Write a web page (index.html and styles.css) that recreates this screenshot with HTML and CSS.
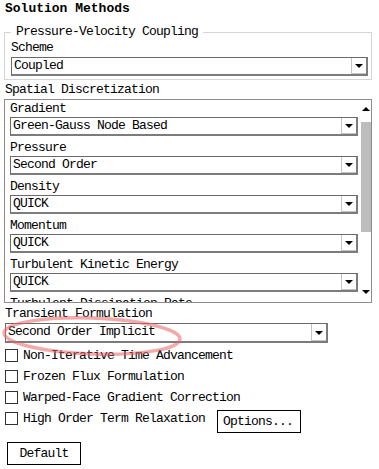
FILE: index.html
```html
<!DOCTYPE html>
<html>
<head>
  <title>Solution Methods</title>
  <link rel="stylesheet" href="styles.css">
</head>
<body>
<div class="panel">
  <div class="title">Solution Methods</div>

  <fieldset class="group">
    <legend>Pressure-Velocity Coupling</legend>
    <div class="label">Scheme</div>
    <div class="select"><span class="val">Coupled</span><span class="drop"><i class="arrow"></i></span></div>
  </fieldset>

  <div class="label outer spatial">Spatial Discretization</div>
  <div class="scrollbox">
    <div class="rows">
      <div class="label">Gradient</div>
      <div class="select"><span class="val">Green-Gauss Node Based</span><span class="drop"><i class="arrow"></i></span></div>
      <div class="label">Pressure</div>
      <div class="select"><span class="val">Second Order</span><span class="drop"><i class="arrow"></i></span></div>
      <div class="label">Density</div>
      <div class="select"><span class="val">QUICK</span><span class="drop"><i class="arrow"></i></span></div>
      <div class="label">Momentum</div>
      <div class="select"><span class="val">QUICK</span><span class="drop"><i class="arrow"></i></span></div>
      <div class="label">Turbulent Kinetic Energy</div>
      <div class="select"><span class="val">QUICK</span><span class="drop"><i class="arrow"></i></span></div>
      <div class="label">Turbulent Dissipation Rate</div>
    </div>
    <div class="scrollbar">
      <i class="arrow up"></i>
      <div class="thumb"></div>
      <i class="arrow"></i>
    </div>
  </div>

  <div class="label outer transient-label">Transient Formulation</div>
  <div class="select transient"><span class="val">Second Order Implicit</span><span class="drop"><i class="arrow"></i></span></div>

  <div class="check"><span class="box"></span>Non-Iterative Time Advancement</div>
  <div class="check"><span class="box"></span>Frozen Flux Formulation</div>
  <div class="check"><span class="box"></span>Warped-Face Gradient Correction</div>
  <div class="check"><span class="box"></span>High Order Term Relaxation<button class="btn options">Options...</button></div>

  <button class="btn default">Default</button>

  <!-- hand drawn highlight -->
  <svg class="mark" width="200" height="50" viewBox="0 0 200 50">
    <ellipse cx="92" cy="22" rx="88" ry="18" transform="rotate(2 92 22)" fill="none" stroke="rgba(232,100,100,0.55)" stroke-width="3.5"/>
  </svg>
</div>
</body>
</html>
```

FILE: styles.css
```css
body {
  margin: 0;
  background: #fff;
  font-family: "Liberation Mono", "DejaVu Sans Mono", monospace;
  font-size: 13px;
  letter-spacing: -0.8px;
  color: #000;
}

.panel {
  position: relative;
  width: 379px;
  height: 469px;
  overflow: hidden;
}

.title {
  font-weight: bold;
  font-size: 13px;
  letter-spacing: 0;
  padding: 2px 0 0 5px;
  height: 18px;
  line-height: 14px;
}

.group {
  margin: 5px 7px 0 4px;
  padding: 0 3px 3px 6px;
  border: 1px solid #d6d6d6;
}

.group legend {
  padding: 0 5px;
  line-height: 14px;
}

.label {
  height: 17px;
  line-height: 17px;
  white-space: nowrap;
}

.label.outer {
  padding-left: 5px;
}

.label.spatial {
  margin-top: 1px;
}

.label.transient-label {
  height: 18px;
  margin-top: 2px;
}

.group .label {
  height: 18px;
}

.select {
  display: flex;
  height: 19px;
  box-sizing: border-box;
  background: #fff;
  border: 1px solid #6a6a6a;
  border-right: 2px solid #7c7c7c;
  border-bottom: 2px solid #7c7c7c;
}

.select .val {
  flex: 1;
  padding-left: 2px;
  line-height: 16px;
  white-space: nowrap;
  overflow: hidden;
}

.select .drop {
  width: 15px;
  display: flex;
  align-items: center;
  justify-content: center;
  box-shadow: inset 1px -1px 0 #c4c4c4;
}

.arrow {
  display: block;
  width: 0;
  height: 0;
  border-top: 4px solid #000;
  border-left: 4px solid transparent;
  border-right: 4px solid transparent;
}

.arrow.up {
  border-top: 0;
  border-bottom: 4px solid #000;
}

.rows .select {
  margin-bottom: 3px;
}

.scrollbox {
  display: flex;
  margin: 1px 7px 0 4px;
  height: 204px;
  box-sizing: border-box;
  border: 1px solid #8c8c8c;
  overflow: hidden;
}

.rows {
  width: 348px;
  padding-left: 5px;
  overflow: hidden;
}

.scrollbar {
  flex: 1;
  display: flex;
  flex-direction: column;
  align-items: center;
  padding-left: 2px;
}

.scrollbar .up {
  margin-top: 7px;
}

.scrollbar .thumb {
  width: 10px;
  height: 110px;
  background: #bdbdbd;
  margin: 11px 0 58px;
}

.transient {
  width: 323px;
  height: 20px;
  margin-left: 5px;
  margin-bottom: 2px;
}

.check {
  display: flex;
  align-items: center;
  height: 21px;
  padding-left: 5px;
  white-space: nowrap;
}

.check .box {
  width: 11px;
  height: 11px;
  border: 1px solid #333;
  margin-right: 5px;
  background: #fff;
}

.btn {
  font-family: inherit;
  font-size: 13px;
  letter-spacing: -0.8px;
  background: #fff;
  border: 1px solid #000;
  padding: 0;
  color: #000;
}

.options {
  width: 84px;
  height: 23px;
  margin: 3px 0 -3px 12px;
  text-align: left;
  padding-left: 5px;
}

.default {
  display: block;
  width: 74px;
  height: 23px;
  margin: 13px 0 0 7px;
}

.mark {
  position: absolute;
  left: 0;
  top: 314px;
  pointer-events: none;
}
```
